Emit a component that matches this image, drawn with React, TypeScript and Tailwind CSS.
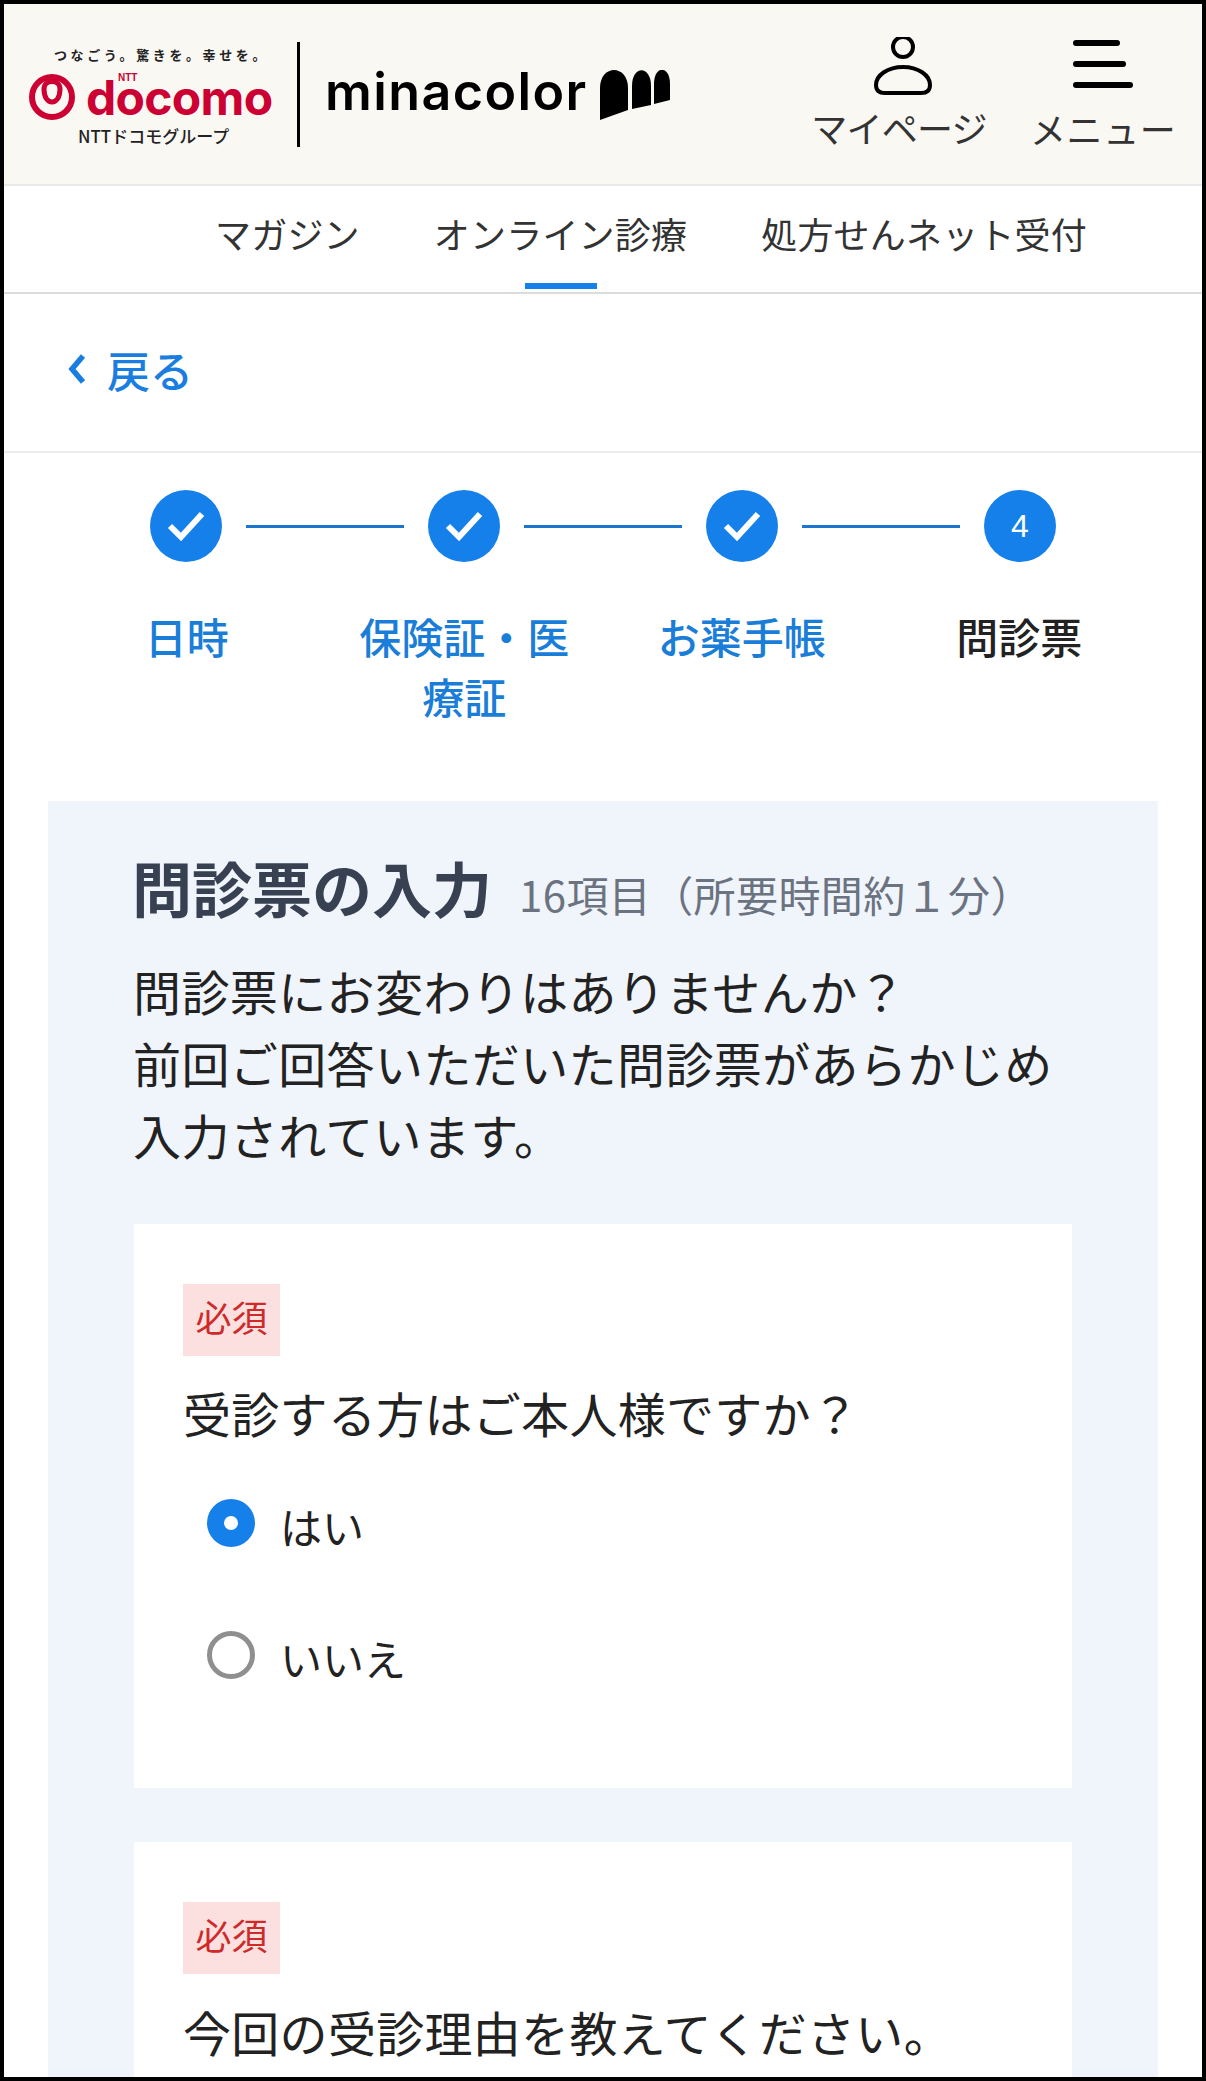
const jp = "font-['Noto_Sans_CJK_JP','Noto_Sans',sans-serif]";

function CheckCircle() {
    return (
        <div className="w-[72px] h-[72px] shrink-0 rounded-full bg-[#1580ea] flex items-center justify-center">
            <svg width="42" height="36" viewBox="0 0 42 36" fill="none">
                <path d="M5 18 L16 29 L37 6" stroke="white" strokeWidth="6" />
            </svg>
        </div>
    );
}

function Connector() {
    return <div className="w-[158px] h-[3px] mx-6 shrink-0 bg-[#1a76cf]" />;
}

function Required() {
    return (
        <div className="w-[97px] h-[72px] pb-[8px] flex items-center justify-center bg-[#fce0e0] text-[36px] leading-none text-[#cf2a2a]">
            必須
        </div>
    );
}

function Radio({ label, checked }: { label: string; checked?: boolean }) {
    return (
        <div className="flex items-center h-[48px] pl-6">
            {checked ? (
                <div className="w-12 h-12 rounded-full bg-[#1580ea] flex items-center justify-center">
                    <div className="w-3.5 h-3.5 rounded-full bg-white" />
                </div>
            ) : (
                <div className="w-12 h-12 rounded-full border-[5px] border-[#8f8f8f] bg-white" />
            )}
            <span className="ml-[25px] mt-[6px] text-[42px] leading-none text-[#222]">{label}</span>
        </div>
    );
}

export default function App() {
    const tabs = [
        { label: 'マガジン', active: false },
        { label: 'オンライン診療', active: true },
        { label: '処方せんネット受付', active: false },
    ];
    const steps = [
        { label: '日時', done: true },
        { label: '保険証・医療証', done: true },
        { label: 'お薬手帳', done: true },
        { label: '問診票', done: false },
    ];

    return (
        <div className={`h-[2081px] overflow-hidden bg-white border-4 border-black ${jp}`}>
            {/* ヘッダー */}
            <header className="relative h-[182px] bg-[#faf8f3] border-b-2 border-[#e9e9e7]">
                <div className="absolute left-[50px] top-[44px] text-[13px] leading-none font-bold tracking-[3.6px] text-[#222] whitespace-nowrap">
                    つなごう。驚きを。幸せを。
                </div>
                <svg className="absolute left-[25px] top-[70px]" width="46" height="46" viewBox="0 0 46 46" fill="none">
                    <circle cx="23" cy="23" r="20" stroke="#cc0033" strokeWidth="6" />
                    <path d="M15 15 C15 5 31 5 31 15 C31 24 27 28 23 28 C19 28 15 24 15 15 Z" stroke="#cc0033" strokeWidth="5" />
                </svg>
                <div className="absolute left-[82px] top-[64px] text-[48px] leading-[60px] font-bold text-[#cc0033] font-['Inter',sans-serif] tracking-[-0.7px]">
                    docomo
                </div>
                <div className="absolute left-[114px] top-[69px] text-[10px] leading-none font-bold text-[#cc0033] font-['Liberation_Sans',sans-serif]">
                    NTT
                </div>
                <div className="absolute left-[74px] top-[122px] text-[17px] leading-[20px] font-medium text-[#222] whitespace-nowrap">
                    NTTドコモグループ
                </div>
                <div className="absolute left-[293px] top-[38px] w-[3px] h-[105px] bg-black" />
                <div className="absolute left-[321px] top-[56px] text-[52px] leading-[64px] font-semibold text-black font-['Inter',sans-serif] tracking-[1.4px]">
                    minacolor
                </div>
                <svg className="absolute left-[596px] top-[66px]" width="72" height="52" viewBox="0 0 72 52" fill="black">
                    <path d="M0 50 V18 C0 -6 28 -6 28 18 V40 Z" />
                    <path d="M32 39 V16 C32 -5 51 -5 51 16 V35 Z" />
                    <path d="M54 34 V14 C54 -5 70 -5 70 14 V30 Z" />
                </svg>
                <div className="absolute left-[805px] top-[33px] w-[180px] flex flex-col items-center">
                    <svg className="ml-[10px]" width="62" height="62" viewBox="0 0 62 62" fill="none" stroke="black" strokeWidth="4">
                        <circle cx="30" cy="10" r="10" />
                        <path d="M12 56 C5 56 3 52 3 48 C3 38 15 30 30 30 C45 30 57 38 57 48 C57 52 55 56 48 56 Z" />
                    </svg>
                    <span className="mt-[6px] text-[36px] leading-[44px] tracking-[-0.8px] text-[#333] whitespace-nowrap">マイページ</span>
                </div>
                <div className="absolute left-[1026px] top-[36px] w-[148px] flex flex-col items-start">
                    <div className="ml-[43px] flex flex-col gap-[15px]">
                        <div className="w-[47px] h-[6px] rounded-full bg-black" />
                        <div className="w-[53px] h-[6px] rounded-full bg-black" />
                        <div className="w-[60px] h-[6px] rounded-full bg-black" />
                    </div>
                    <span className="mt-[18px] text-[36px] leading-[44px] tracking-[0.6px] text-[#333] whitespace-nowrap">メニュー</span>
                </div>
            </header>

            {/* タブ */}
            <nav className="h-[108px] flex border-b-2 border-[#dcdcdc] pl-[174px]">
                {tabs.map((tab) => (
                    <div key={tab.label} className="relative h-full px-[37px] flex items-center pb-[12px]">
                        <span className="text-[36px] leading-none tracking-[0.2px] text-[#333] whitespace-nowrap">{tab.label}</span>
                        {tab.active && (
                            <div className="absolute left-1/2 -translate-x-1/2 bottom-[3px] w-[72px] h-[6px] bg-[#1580ea]" />
                        )}
                    </div>
                ))}
            </nav>

            {/* 戻る */}
            <div className="h-[159px] flex items-center pl-[62px] border-b-2 border-[#ececec] pb-[7px]">
                <svg width="22" height="36" viewBox="0 0 22 36" fill="none">
                    <path d="M17 5 L6 18 L17 31" stroke="#1a7ee0" strokeWidth="5.5" />
                </svg>
                <span className="ml-[19px] text-[43px] font-medium leading-none text-[#1a7ee0]">戻る</span>
            </div>

            {/* ステップ */}
            <div className="pt-[37px] flex items-center pl-[146px]">
                <CheckCircle />
                <Connector />
                <CheckCircle />
                <Connector />
                <CheckCircle />
                <Connector />
                <div className="w-[72px] h-[72px] shrink-0 rounded-full bg-[#1580ea] flex items-center justify-center text-white text-[32px] leading-none font-['Liberation_Sans',sans-serif]">
                    4
                </div>
            </div>
            <div className="mt-[44px] pl-[44px] pr-[44px] grid grid-cols-4 h-[195px]">
                {steps.map((step) => (
                    <div
                        key={step.label}
                        className={`px-4 text-center text-[42px] font-medium leading-[60px] ${step.done ? 'text-[#1a7ed8]' : 'text-[#222]'}`}
                    >
                        {step.label}
                    </div>
                ))}
            </div>

            {/* 問診票 */}
            <main className="mx-11 bg-[#f0f4fb] px-[86px] pt-[46px]">
                <div className="flex items-baseline whitespace-nowrap -ml-[2px]">
                    <h1 className="text-[60px] leading-[80px] font-bold text-[#374151]">問診票の入力</h1>
                    <span className="ml-[27px] -translate-y-px text-[42px] tracking-[0.4px] text-[#6b7280]">16項目（所要時間約１分）</span>
                </div>
                <p className="mt-[27px] -ml-px text-[48px] leading-[72px] tracking-[0.4px] text-[#222]">
                    問診票にお変わりはありませんか？
                    <br />
                    前回ご回答いただいた問診票があらかじめ
                    <br />
                    入力されています。
                </p>

                <section className="mt-[54px] h-[564px] bg-white px-[49px] pt-[60px]">
                    <Required />
                    <h2 className="mt-[20px] text-[48px] leading-[72px] tracking-[0.3px] text-[#222]">受診する方はご本人様ですか？</h2>
                    <div className="mt-[51px] flex flex-col gap-[84px]">
                        <Radio label="はい" checked />
                        <Radio label="いいえ" />
                    </div>
                </section>

                <section className="mt-[54px] h-[400px] bg-white px-[49px] pt-[60px]">
                    <Required />
                    <h2 className="mt-[21px] text-[48px] leading-[72px] tracking-[0.3px] text-[#222]">今回の受診理由を教えてください。</h2>
                </section>
            </main>
        </div>
    );
}
